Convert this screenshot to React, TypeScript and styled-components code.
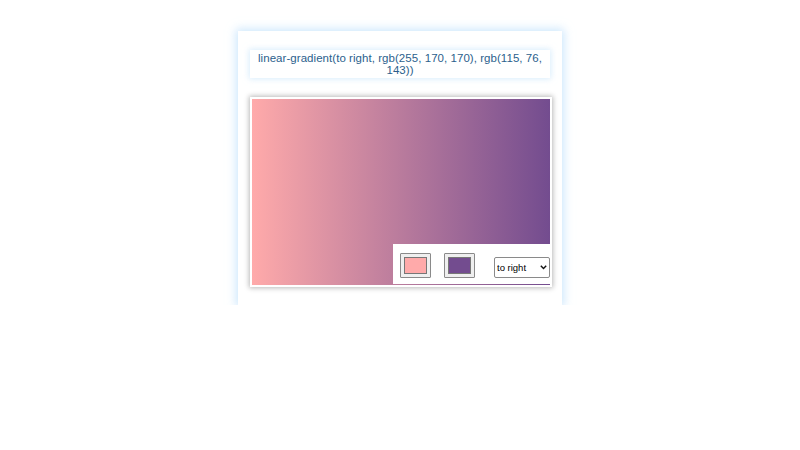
import React, { useState } from "react";
import styled, { createGlobalStyle } from "styled-components";

const Global = createGlobalStyle`
  html, body { margin: 0; padding: 0; background: #fff; }
  body { font-family: "Liberation Sans", Arial, sans-serif; }
`;

const Page = styled.div`
  display: flex;
  justify-content: center;
  padding-top: 31px;
`;

const Card = styled.div`
  width: 300px;
  padding: 19px 12px 18px;
  background: #fff;
  box-shadow: 0 0 9px 2px rgba(170, 215, 250, 0.6);
  display: flex;
  flex-direction: column;
  gap: 19px;
`;

const Label = styled.div`
  height: 28px;
  box-sizing: border-box;
  padding-top: 1.5px;
  background: #fff;
  box-shadow: 0 0 6px 1px rgba(190, 225, 250, 0.6);
  color: #2c5f8d;
  font-size: 11.5px;
  line-height: 12.5px;
  letter-spacing: 0.05px;
  text-align: center;
`;

const Preview = styled.div<{ $from: string; $to: string; $dir: string }>`
  position: relative;
  width: 298px;
  height: 186px;
  border: 2px solid #fff;
  box-shadow: 0 0 5px 1px rgba(0, 0, 0, 0.28);
  background: linear-gradient(${(p) => p.$dir}, ${(p) => p.$from}, ${(p) => p.$to});
`;

const Controls = styled.div`
  position: absolute;
  right: 0;
  bottom: 1px;
  width: 157px;
  height: 40px;
  box-sizing: border-box;
  background: #fff;
  display: flex;
  align-items: flex-start;
  padding: 9px 0 0 7px;
`;

const Swatch = styled.div<{ $color: string; $gap: number }>`
  width: 31px;
  height: 25px;
  box-sizing: border-box;
  border: 1px solid #8a8a8a;
  border-radius: 1px;
  background: #efefef;
  padding: 3px 3px;
  margin-right: ${(p) => p.$gap}px;
  &::after {
    content: "";
    display: block;
    width: 100%;
    height: 100%;
    box-sizing: border-box;
    border: 1px solid #777;
    background: ${(p) => p.$color};
  }
`;

const SelectWrap = styled.div`
  position: relative;
  margin-top: 4px;
  width: 56px;
  height: 21px;
`;

const Select = styled.select`
  appearance: none;
  -webkit-appearance: none;
  width: 100%;
  height: 100%;
  box-sizing: border-box;
  font-family: "Liberation Sans", Arial, sans-serif;
  font-size: 9.5px;
  color: #000;
  background: #fff;
  border: 1px solid #8a8a8a;
  border-radius: 2px;
  padding: 0 12px 0 2px;
  outline: none;
`;

const Chevron = styled.svg`
  position: absolute;
  right: 3px;
  top: 8px;
  width: 7px;
  height: 5px;
  pointer-events: none;
`;

export default function App() {
  const [dir, setDir] = useState("to right");
  const from = "rgb(255, 170, 170)";
  const to = "rgb(115, 76, 143)";
  const css = `linear-gradient(${dir}, ${from}, ${to})`;
  return (
    <>
      <Global />
      <Page>
        <Card>
          <Label>{css}</Label>
          <Preview $from={from} $to={to} $dir={dir}>
            <Controls>
              <Swatch $color={from} $gap={13} />
              <Swatch $color={to} $gap={19} />
              <SelectWrap>
                <Select value={dir} onChange={(e) => setDir(e.target.value)}>
                  <option value="to right">to right</option>
                  <option value="to left">to left</option>
                  <option value="to top">to top</option>
                  <option value="to bottom">to bottom</option>
                </Select>
                <Chevron viewBox="0 0 7 5">
                  <path d="M0.8 0.8 L3.5 3.6 L6.2 0.8" fill="none" stroke="#111" strokeWidth="1.4" />
                </Chevron>
              </SelectWrap>
            </Controls>
          </Preview>
        </Card>
      </Page>
    </>
  );
}
